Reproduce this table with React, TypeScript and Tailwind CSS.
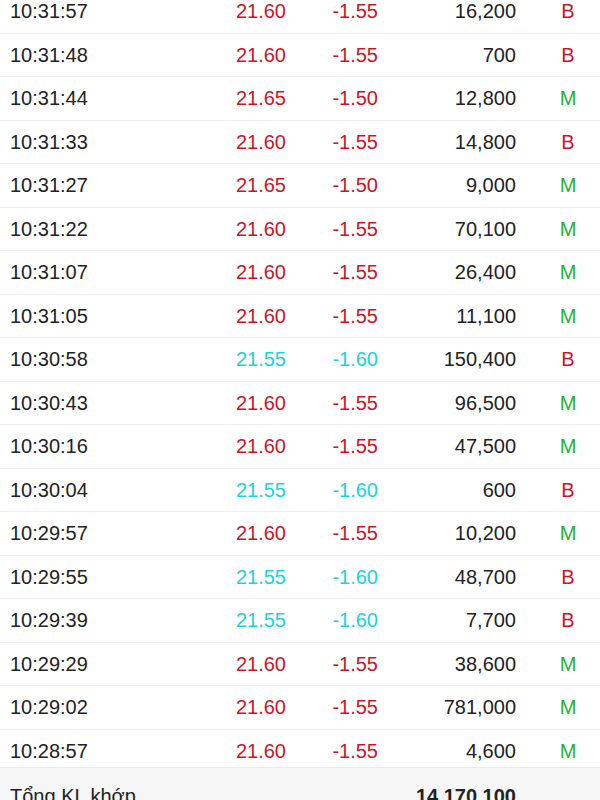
type Trade = {
  time: string;
  price: string;
  change: string;
  volume: string;
  side: "B" | "M";
};

const trades: Trade[] = [
  { time: "10:31:57", price: "21.60", change: "-1.55", volume: "16,200", side: "B" },
  { time: "10:31:48", price: "21.60", change: "-1.55", volume: "700", side: "B" },
  { time: "10:31:44", price: "21.65", change: "-1.50", volume: "12,800", side: "M" },
  { time: "10:31:33", price: "21.60", change: "-1.55", volume: "14,800", side: "B" },
  { time: "10:31:27", price: "21.65", change: "-1.50", volume: "9,000", side: "M" },
  { time: "10:31:22", price: "21.60", change: "-1.55", volume: "70,100", side: "M" },
  { time: "10:31:07", price: "21.60", change: "-1.55", volume: "26,400", side: "M" },
  { time: "10:31:05", price: "21.60", change: "-1.55", volume: "11,100", side: "M" },
  { time: "10:30:58", price: "21.55", change: "-1.60", volume: "150,400", side: "B" },
  { time: "10:30:43", price: "21.60", change: "-1.55", volume: "96,500", side: "M" },
  { time: "10:30:16", price: "21.60", change: "-1.55", volume: "47,500", side: "M" },
  { time: "10:30:04", price: "21.55", change: "-1.60", volume: "600", side: "B" },
  { time: "10:29:57", price: "21.60", change: "-1.55", volume: "10,200", side: "M" },
  { time: "10:29:55", price: "21.55", change: "-1.60", volume: "48,700", side: "B" },
  { time: "10:29:39", price: "21.55", change: "-1.60", volume: "7,700", side: "B" },
  { time: "10:29:29", price: "21.60", change: "-1.55", volume: "38,600", side: "M" },
  { time: "10:29:02", price: "21.60", change: "-1.55", volume: "781,000", side: "M" },
  { time: "10:28:57", price: "21.60", change: "-1.55", volume: "4,600", side: "M" },
];

// floor price 21.55 shows in cyan, the rest are down (red)
function priceColor(price: string) {
  return price === "21.55" ? "text-[#1ad3dd]" : "text-[#cc1426]";
}

function TradeRow({ t }: { t: Trade }) {
  const color = priceColor(t.price);
  return (
    <div className="flex items-center h-[43.5px] shrink-0 border-b border-[#efefef]">
      <div className="w-[181px] pl-[10px] text-[#222]">{t.time}</div>
      <div className={`w-[105px] text-right ${color}`}>{t.price}</div>
      <div className={`w-[92px] text-right ${color}`}>{t.change}</div>
      <div className="w-[138px] text-right text-[#222]">{t.volume}</div>
      <div
        className={`w-[60px] ml-[22px] text-center ${
          t.side === "B" ? "text-[#cc1426]" : "text-[#20b534]"
        }`}
      >
        {t.side}
      </div>
    </div>
  );
}

export default function App() {
  return (
    <div
      className="h-screen flex flex-col bg-white text-[20px] overflow-hidden"
      style={{ fontFamily: '"Liberation Sans", Arial, sans-serif' }}
    >
      <div className="h-[767px] shrink-0 overflow-hidden">
        <div className="flex flex-col -mt-[10px]">
          {trades.map((t) => (
            <TradeRow key={t.time} t={t} />
          ))}
        </div>
      </div>
      <div className="h-[56px] shrink-0 flex items-center bg-[#f6f6f6] border-t border-[#ececec]">
        <div className="w-[181px] pl-[10px] text-[#222] whitespace-nowrap">Tổng KL khớp</div>
        <div className="w-[335px] text-right font-bold text-[#222]">14,170,100</div>
      </div>
    </div>
  );
}
